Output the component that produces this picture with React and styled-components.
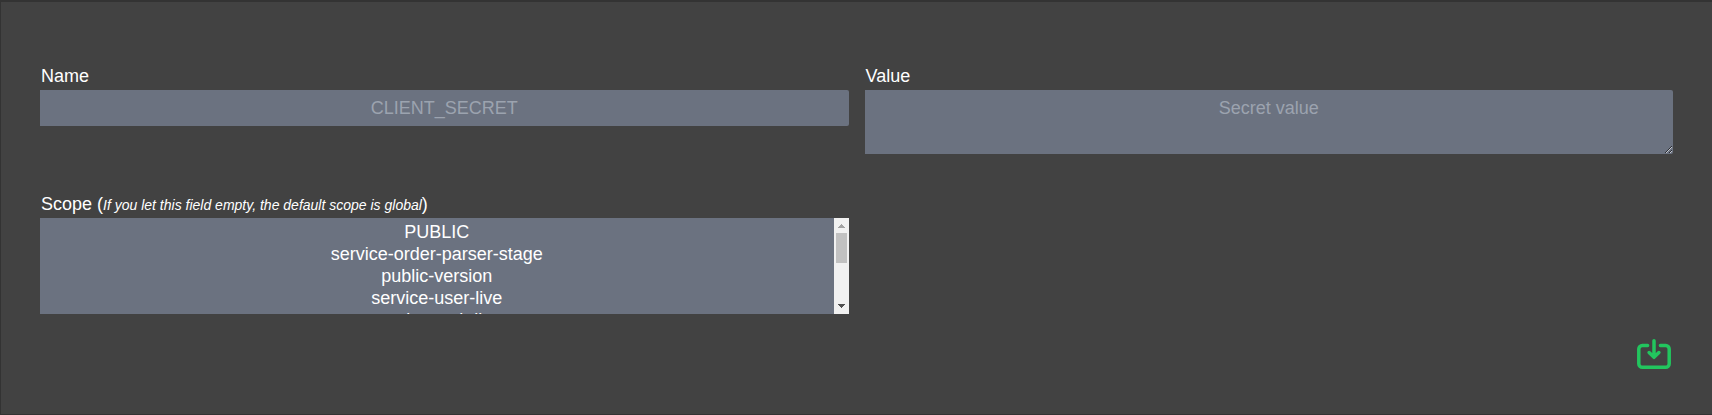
import React from 'react';
import styled, { createGlobalStyle } from 'styled-components';

const Global = createGlobalStyle`
  * { box-sizing: border-box; }
  body { margin: 0; background: #424242; }
`;
const Panel = styled.form`
  height: 415px;
  padding: 62px 39px 0 39px;
  border-top: 2px solid #333;
  border-left: 1px solid #333;
  border-bottom: 1px solid #333;
  background: #424242;
  color: #fff;
  font: 18px/24px "Liberation Sans", Arial, sans-serif;
`;
const Fields = styled.div`
  display: grid;
  grid-template-columns: 1fr 1fr;
  grid-template-rows: 128px 122px;
  column-gap: 16px;
`;
const Field = styled.div`
  display: flex;
  flex-direction: column;
`;
const Label = styled.label`
  height: 26px;
  padding-left: 1px;
  line-height: 24px;
  small { font-size: 14px; font-style: italic; }
`;
const control = `
  display: block;
  width: 100%;
  margin: 0;
  border: 0;
  border-radius: 0 2px 2px 0;
  outline: 0;
  background: #6b7280;
  color: #fff;
  font: inherit;
  text-align: center;
  &::placeholder { color: #9ca3af; opacity: 1; }
`;
const Input = styled.input`
  ${control}
  height: 36px;
  padding: 6px 8px;
`;
const TextArea = styled.textarea`
  ${control}
  height: 64px;
  padding: 6px 8px;
`;
const ScopeBox = styled.div`
  display: flex;
  height: 96px;
  overflow: hidden;
  background: #6b7280;
`;
const Options = styled.ul`
  flex: 1;
  margin: 0;
  padding: 3px 0 0;
  list-style: none;
  line-height: 22px;
  text-align: center;
`;
const Track = styled.div`
  display: flex;
  flex-direction: column;
  align-items: center;
  width: 15px;
  background: #f1f1f1;
  svg { display: block; flex: none; }
`;
const Thumb = styled.div`
  width: 11px;
  height: 30px;
  margin-bottom: auto;
  background: #c1c1c1;
`;
const Actions = styled.div`
  display: flex;
  justify-content: flex-end;
  padding-top: 23px;
`;
const SaveButton = styled.button`
  display: block;
  padding: 0;
  border: 0;
  background: none;
  color: #22c55e;
  svg { display: block; }
`;

const scopes = ['PUBLIC', 'service-order-parser-stage', 'public-version', 'service-user-live', 'service-task-live'];

export default function App() {
  return (
    <Panel>
      <Global />
      <Fields>
        <Field>
          <Label htmlFor="name">Name</Label>
          <Input id="name" placeholder="CLIENT_SECRET" />
        </Field>
        <Field>
          <Label htmlFor="value">Value</Label>
          <TextArea id="value" placeholder="Secret value" />
        </Field>
        <Field>
          <Label>Scope (<small>If you let this field empty, the default scope is global</small>)</Label>
          <ScopeBox>
            <Options>{scopes.map((s) => <li key={s}>{s}</li>)}</Options>
            <Track>
              <svg width="15" height="15" shapeRendering="crispEdges"><path d="M4 10L7.5 6L11 10Z" fill="#a3a3a3" /></svg>
              <Thumb />
              <svg width="15" height="15" shapeRendering="crispEdges"><path d="M4 5L7.5 9L11 5Z" fill="#505050" /></svg>
            </Track>
          </ScopeBox>
        </Field>
      </Fields>
      <Actions>
        <SaveButton type="button" aria-label="Save">
          <svg width="38" height="36" viewBox="0 0 38 36" fill="none" stroke="currentColor" strokeWidth="3.5" strokeLinecap="round" strokeLinejoin="round">
            <path d="M12.600 8.500H7.300a3.500 3.500 0 0 0-3.500 3.500V26.700a3.500 3.500 0 0 0 3.500 3.500H30.700a3.500 3.500 0 0 0 3.500-3.500V12a3.500 3.500 0 0 0-3.500-3.500H25.400" />
            <path d="M19 3.800V20M14.100 15.500L19 20.300L23.900 15.500" />
          </svg>
        </SaveButton>
      </Actions>
    </Panel>
  );
}
